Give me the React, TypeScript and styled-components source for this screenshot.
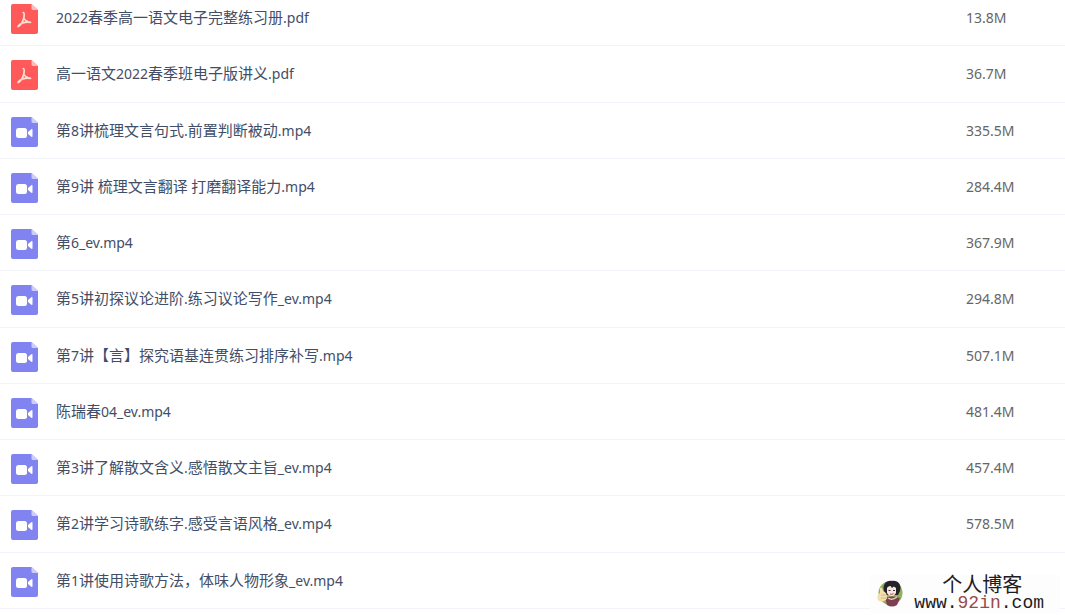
import React from "react";
import styled, { createGlobalStyle } from "styled-components";

const GlobalStyle = createGlobalStyle`
  body {
    margin: 0;
    background: #fff;
    overflow: hidden;
    font-family: "Noto Sans", "Noto Sans CJK SC", sans-serif;
  }
`;

const Page = styled.main`
  position: relative;
  overflow: hidden;
  padding-bottom: 4px;
`;

const FileTable = styled.table`
  width: 100%;
  margin-top: -10px;
  border-collapse: separate;
  border-spacing: 0;
  table-layout: fixed;
`;

const IconCol = styled.col`
  width: 56px;
`;

const SizeCol = styled.col`
  width: 99px;
`;

const FileRow = styled.tr`
  height: 56px;

  &:nth-child(4n + 2) {
    height: 57px;
  }
`;

const Cell = styled.td`
  box-sizing: border-box;
  padding: 17px 0 0;
  border-bottom: 1px solid #f1f4fa;
  vertical-align: top;
  white-space: nowrap;
`;

const IconCell = styled(Cell)`
  padding: 14px 0 0 11px;

  svg {
    display: block;
  }
`;

const NameLink = styled.a`
  display: block;
  color: #424e67;
  font-family: "Noto Sans CJK SC", sans-serif;
  font-size: 15px;
  font-weight: 400;
  line-height: 20px;
  text-decoration: none;
`;

const Latin = styled.span`
  font-family: "Noto Sans", sans-serif;
  font-size: 14px;
`;

const SizeCell = styled(Cell)`
  color: #666;
  font-size: 14px;
  line-height: 22px;
`;

const Watermark = styled.aside`
  position: absolute;
  right: 5px;
  bottom: 0;
  display: flex;
  align-items: center;
  gap: 10px;
  height: 38px;
  padding: 0 16px 0 6px;
  background: #fefdfd;
`;

const WatermarkText = styled.div`
  display: flex;
  flex-direction: column;
  align-items: center;
  padding-bottom: 2px;
  color: #1d1c22;
`;

const BlogTitle = styled.span`
  padding-left: 6px;
  font-family: "Liberation Serif", "Noto Sans CJK SC", serif;
  font-size: 20px;
  line-height: 20px;
`;

const BlogUrl = styled.span`
  font-family: "Liberation Mono", monospace;
  font-size: 18px;
  line-height: 16px;
`;

const Accent = styled.span`
  color: #984a48;
`;

type Kind = "pdf" | "video";

const files: { name: string; size: string; kind: Kind }[] = [
  { name: "2022春季高一语文电子完整练习册.pdf", size: "13.8M", kind: "pdf" },
  { name: "高一语文2022春季班电子版讲义.pdf", size: "36.7M", kind: "pdf" },
  { name: "第8讲梳理文言句式.前置判断被动.mp4", size: "335.5M", kind: "video" },
  { name: "第9讲 梳理文言翻译 打磨翻译能力.mp4", size: "284.4M", kind: "video" },
  { name: "第6_ev.mp4", size: "367.9M", kind: "video" },
  { name: "第5讲初探议论进阶.练习议论写作_ev.mp4", size: "294.8M", kind: "video" },
  { name: "第7讲【言】探究语基连贯练习排序补写.mp4", size: "507.1M", kind: "video" },
  { name: "陈瑞春04_ev.mp4", size: "481.4M", kind: "video" },
  { name: "第3讲了解散文含义.感悟散文主旨_ev.mp4", size: "457.4M", kind: "video" },
  { name: "第2讲学习诗歌练字.感受言语风格_ev.mp4", size: "578.5M", kind: "video" },
  { name: "第1讲使用诗歌方法，体味人物形象_ev.mp4", size: "", kind: "video" },
];

function FileIcon({ kind }: { kind: Kind }) {
  const pdf = kind === "pdf";
  return (
    <svg width="27" height="30" viewBox="0 0 27 30" aria-hidden="true">
      <path
        d="M2 0H20.500L27 6V28a2 2 0 0 1-2 2H2a2 2 0 0 1-2-2V2a2 2 0 0 1 2-2Z"
        fill={pdf ? "#ff5959" : "#8183f1"}
      />
      <path d="M20.500 0L27 6H22a1.500 1.500 0 0 1-1.500-1.500Z" fill={pdf ? "#ffbcbc" : "#cccdfb"} />
      {pdf ? (
        <path
          d="M12.200 8.500C13.600 8.500 13.300 11.500 12.800 14C13.800 16.300 16 17.800 19.500 18.300M12.800 14C11.800 17.500 9.800 21.500 7 22.500M7 22.500C8.500 19.500 14 17.300 19.500 18.300"
          fill="none"
          stroke="#ffe0d2"
          strokeWidth="1.700"
          strokeLinecap="round"
          strokeLinejoin="round"
        />
      ) : (
        <>
          <rect x="5" y="11" width="11" height="10" rx="2.500" fill="#fff" />
          <path d="M17 15L20.300 12.200Q21.500 11.500 21.500 13V19Q21.500 20.500 20.300 19.800L17 17Z" fill="#fff" />
        </>
      )}
    </svg>
  );
}

function Avatar() {
  return (
    <svg width="28" height="30" viewBox="0 0 28 30" aria-hidden="true">
      <circle cx="14.500" cy="14" r="12" fill="#8fb25a" />
      <path d="M8 12C6 5 11 1 16 2C22 1 26 6 24 12L22 16H10Z" fill="#24222b" />
      <path d="M11 9C13 6 18 7 20 9L20 14C18 18 13 18 11 14Z" fill="#f8e6dd" />
      <path d="M10 10L13 5L16 9L19 6L22 11L20 4L12 3Z" fill="#24222b" />
      <path d="M12.500 11.500h2M17 11.500h2" stroke="#38303a" strokeWidth="1.200" />
      <path d="M14 15Q16 16 17.500 14.500" stroke="#b44b4b" fill="none" />
      <path d="M9 19Q16 16 24 19L21 26Q16 29 11 26Z" fill="#7c3f4f" />
      <path d="M12 19Q16 22 21 18" stroke="#e9c6bd" strokeWidth="1.500" fill="none" />
      <path d="M4 9Q6 7 7 12L10 14Q12 18 10 21Q5 24 2 21Q0 17 4 14Z" fill="#f3dfad" />
      <path d="M5 16h5M5 19h5" stroke="#c9ad77" strokeWidth="0.700" />
    </svg>
  );
}

function FileName({ text }: { text: string }) {
  const parts = text.match(/[\x20-\x7e]+|[^\x20-\x7e]+/g) ?? [];
  return (
    <NameLink href="#">
      {parts.map((part, i) =>
        /^[\x20-\x7e]/.test(part) ? <Latin key={i}>{part}</Latin> : part
      )}
    </NameLink>
  );
}

export default function App() {
  return (
    <>
      <GlobalStyle />
      <Page>
        <FileTable>
          <colgroup>
            <IconCol />
            <col />
            <SizeCol />
          </colgroup>
          <tbody>
            {files.map((file) => (
              <FileRow key={file.name}>
                <IconCell>
                  <FileIcon kind={file.kind} />
                </IconCell>
                <Cell>
                  <FileName text={file.name} />
                </Cell>
                <SizeCell>{file.size}</SizeCell>
              </FileRow>
            ))}
          </tbody>
        </FileTable>
        <Watermark>
          <Avatar />
          <WatermarkText>
            <BlogTitle>个人博客</BlogTitle>
            <BlogUrl>
              www.<Accent>92in</Accent>.com
            </BlogUrl>
          </WatermarkText>
        </Watermark>
      </Page>
    </>
  );
}
